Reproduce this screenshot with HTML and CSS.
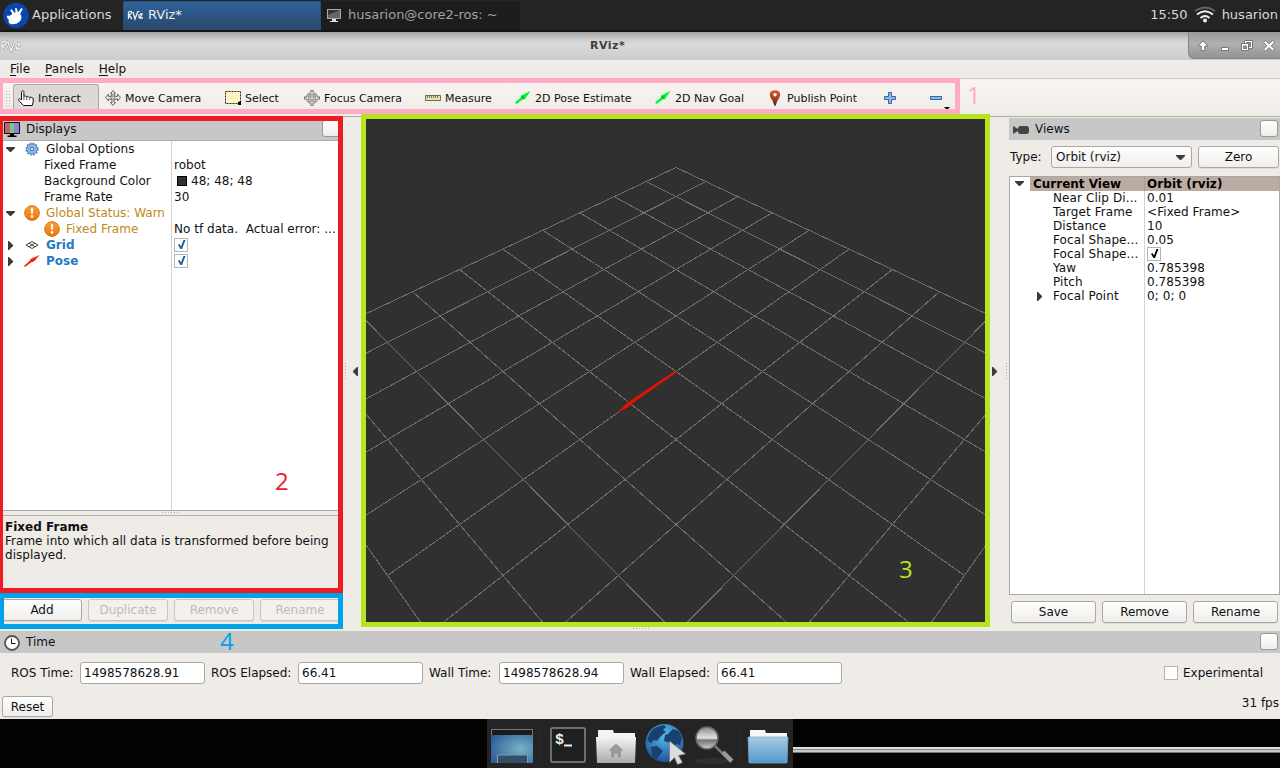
FILE: index.html
```html
<!DOCTYPE html>
<html lang="en">
<head>
<meta charset="utf-8">
<title>RViz*</title>
<link rel="stylesheet" href="styles.css">
</head>
<body>
<svg class="defs" width="0" height="0">
  <defs>
    <linearGradient id="steel" x1="0" y1="0" x2="0" y2="1"><stop offset="0" stop-color="#f4f4f4"/><stop offset="1" stop-color="#aaa"/></linearGradient>
    <linearGradient id="blueFolder" x1="0" y1="0" x2="0" y2="1"><stop offset="0" stop-color="#a9cbe4"/><stop offset="1" stop-color="#5398cc"/></linearGradient>
    <radialGradient id="desk" cx=".7" cy=".5" r=".8"><stop offset="0" stop-color="#74b5c7"/><stop offset="1" stop-color="#2e5b98"/></radialGradient>
    <radialGradient id="globe" cx=".5" cy=".3" r=".7"><stop offset="0" stop-color="#55bde6"/><stop offset="1" stop-color="#2152a0"/></radialGradient>
    <linearGradient id="lens" x1="0" y1="0" x2="0" y2="1"><stop offset="0" stop-color="#888"/><stop offset=".5" stop-color="#e2e2e2"/><stop offset=".6" stop-color="#777"/><stop offset="1" stop-color="#ccc"/></linearGradient>
    <linearGradient id="orange" x1="0" y1="0" x2="0" y2="1"><stop offset="0" stop-color="#f9a13c"/><stop offset="1" stop-color="#ee7406"/></linearGradient>
    <linearGradient id="pin" x1="0" y1="0" x2="0" y2="1"><stop offset="0" stop-color="#ec5330"/><stop offset=".5" stop-color="#a9401f"/><stop offset="1" stop-color="#3b2b14"/></linearGradient>
    <g id="warn"><circle cx="8" cy="8" r="7.4" fill="url(#orange)" stroke="#d3690b" stroke-width=".8"/><path d="M6.8 3.2h2.4l-.5 5.8H7.3z" fill="#fff"/><circle cx="8" cy="11.4" r="1.3" fill="#fff"/></g>
    <g id="goal"><path d="M0 12.500 6 7.500l-.3-1.700L15.500 1 9.800 9.200 8 9.200 1.500 14z" fill="#00f52d"/><path d="M6 7 9.500 9.200 8 6.300z" fill="#0b8e2a"/></g>
    <g id="down"><path d="M0 0h9v1L5 5H4L0 1z"/></g>
    <g id="right"><path d="M0 0h1l4 4v1L1 9H0z"/></g>
    <g id="lines">
      <path d="M0-204L-432.700 0M29.840-189.930L-409.930 32.210M61.810-174.860L-384.620 68M96.160-158.670L-356.340 108M133.140-141.230L-324.530 153M173.080-122.400L-288.470 204M216.350-102L-247.260 262.290M263.380-79.830L-199.710 329.540M314.690-55.640L-144.230 408M370.890-29.140L-78.670 500.730M432.700 0L0 612"/>
    </g>
  </defs>
</svg>

<div class="screen">
  <header class="taskbar">
    <svg class="mouse" width="26" height="27" viewBox="0 0 26 27"><circle cx="13" cy="13.500" r="12.800" fill="#0b46ac"/><path d="M4 13.500c2 .8 4.500-.3 5.200-1.800l-2-3.700 1.400-.8 3 3.600.9-.2-.4-4.500 1.500-.1 1.400 4.500 3.200-4.500 1.500.9-2.600 5c1.800 1.600 1.800 4.800 0 7.200-2.200 2.900-7 4.100-10 2.600-2-.8-1.300-2.500-1.400-4-1-1-2.400-2.700-1.700-4.200z" fill="#fff"/></svg>
    <span class="apps">Applications</span>
    <div class="task task-active">
      <svg width="16" height="12" viewBox="0 0 16 12" fill="none" stroke="#eee" stroke-width="1.300"><path d="M1.500 10V3c4-2 4 2 .5 3l3 4M6 3l2 7 3-8M12 5v4m0-7v1M13 5h2l-2 4h3"/></svg>
      <span>RViz*</span>
    </div>
    <div class="task task-idle">
      <svg width="15" height="15" viewBox="0 0 15 15"><rect x=".5" y="1.500" width="13" height="9" fill="#666" stroke="#aaa"/><path d="M1 2h12L1 7z" fill="#353535"/><path d="M5 11h4v2h2v1H3v-1h2z" fill="#ddd"/></svg>
      <span>husarion@core2-ros: ~</span>
    </div>
    <div class="tray">
      <span>15:50</span>
      <svg width="22" height="18" viewBox="0 0 22 18" fill="none" stroke-width="2"><path d="M1 5Q11-2 21 5" stroke="#666"/><path d="M3 8.500Q11 2 19 8.500M6.500 12Q11 8 15.500 12" stroke="#eee"/><circle cx="11" cy="14.500" r="2" fill="#eee"/></svg>
      <span class="user">husarion</span>
    </div>
  </header>

  <div class="titlebar">
    <svg class="rviz-mark" width="21" height="14" viewBox="0 0 21 14" fill="none"><path d="M2 12V3c6-3 6 2 1 4l4 5M8 3l3 9 4-10M16 5v5m0-8v1M17 5h3l-3 5h3" stroke="#999" stroke-width="2.600"/><path d="M2 12V3c6-3 6 2 1 4l4 5M8 3l3 9 4-10M16 5v5m0-8v1M17 5h3l-3 5h3" stroke="#f4f4f4" stroke-width="1.400"/></svg>
    <b>RViz*</b>
    <div class="winbtns">
      <svg width="92" height="28" viewBox="0 0 92 28" fill="#fff" stroke="#777" stroke-width="1"><path d="M14 9l5 5h-3.200v4.500h-3.600V14H9z"/><path d="M32.500 15.500h7v3h-7z"/><path d="M55.500 8.500h8v8h-8z"/><path d="M57.500 10.500h4v4h-4z" fill="#999"/><path d="M52.500 11.500h7v7h-7z"/><path d="M54.500 14h3v2.500h-3z" fill="#999"/><path d="M74.500 10.500l2-2 3.500 3.300 3.500-3.300 2 2-3.400 3.300 3.400 3.300-2 2-3.500-3.400-3.500 3.400-2-2 3.400-3.300z"/></svg>
    </div>
  </div>

  <nav class="menubar"><span><u>F</u>ile</span><span><u>P</u>anels</span><span><u>H</u>elp</span></nav>

  <div class="toolbar">
    <i class="grip"></i>
    <button class="tool w-interact on"><svg width="16" height="16" viewBox="0 0 16 16"><path d="M3.500 10V2.200c0-2 2.400-2 2.400 0V6.500c1-.8 2.400-.5 2.900.5 1-.6 2.400-.4 2.900.5 1.300-.7 3.300 0 3.500 1.500V12l-1 3.500H5.500L.8 10.500c-1-1.500.7-2.500 1.700-1.500z" fill="#fff" stroke="#111"/><path d="M8.700 7v3M11.800 7.500V10M5.900 6.500V10" stroke="#555"/></svg><span>Interact</span></button>
    <button class="tool w-move"><svg width="16" height="16" viewBox="0 0 16 16"><path d="M8 .5l2.500 3H9v1.500l2 1.500h1.500V4l3 3.500-3 3.500V9H11l-2 1.500V12.500h1.500L8 15.500 5.500 12.500H7V10.500L5 9H3.500v2L.5 7.500l3-3.500v2.500H5L7 5V3.500H5.500z" fill="#eee" stroke="#666"/><circle cx="8" cy="7.800" r="2" fill="#ccc" stroke="#777"/></svg><span>Move Camera</span></button>
    <button class="tool w-select"><svg width="16" height="14" viewBox="0 0 16 14"><rect x=".5" y=".5" width="15" height="12" fill="#fff6bf" stroke="#222" stroke-dasharray="2 1"/><path d="M13 13v-2l3-1v4h-3z"/></svg><span>Select</span></button>
    <button class="tool w-focus"><svg width="16" height="16" viewBox="0 0 16 16" fill="none"><circle cx="8" cy="8" r="4.800" stroke="#777" stroke-width="2.600"/><path d="M8 0v16M0 8h16" stroke="#777" stroke-width="3"/><circle cx="8" cy="8" r="4.800" stroke="#ddd"/><path d="M8 1v14M1 8h14" stroke="#eee"/></svg><span>Focus Camera</span></button>
    <button class="tool w-measure"><svg width="16" height="16" viewBox="0 0 16 16"><path d="M.5 5.500h15v5H.5z" fill="#e9e1ae" stroke="#71694d"/><path d="M2.500 6v2M4.500 6v2M6.500 6v2M8.500 6v2M10.500 6v2M12.500 6v2" stroke="#777"/></svg><span>Measure</span></button>
    <button class="tool w-pose"><svg width="16" height="16" viewBox="0 0 16 16"><use href="#goal"/></svg><span>2D Pose Estimate</span></button>
    <button class="tool w-nav"><svg width="16" height="16" viewBox="0 0 16 16"><use href="#goal"/></svg><span>2D Nav Goal</span></button>
    <button class="tool w-publish"><svg width="16" height="16" viewBox="0 0 16 16"><path d="M8 .2c7 0 6 6.300 2.500 10.300L8.600 15.800H7.400L5.500 10.500C2 6.500 1 .2 8 .2z" fill="url(#pin)"/><circle cx="8" cy="4.800" r="1.700" fill="#fff"/></svg><span>Publish Point</span></button>
    <button class="tool w-plus"><svg width="16" height="16" viewBox="0 0 16 16"><path d="M6.500 2.500h3v4h4v3h-4v4h-3v-4h-4v-3h4z" fill="#8fb8e3" stroke="#2c67a8"/></svg></button>
    <button class="tool"><svg width="16" height="16" viewBox="0 0 16 16"><path d="M2.500 6.500h11v3h-11z" fill="#8fb8e3" stroke="#2c67a8"/></svg></button>
    <svg class="more" width="6" height="3"><path d="M0 0h6L3 3z"/></svg>
  </div>

  <main class="workspace">
    <section class="displays">
      <div class="dockhead">
        <svg width="16" height="16" viewBox="0 0 16 16"><path d="M.5.500h15v11H.5z" fill="#8c9" stroke="#111"/><path d="M1 1h5v10H1z" fill="#b9666d"/><path d="M6 1h4v10H6z" fill="#7cc788"/><path d="M10 1h5v10h-5z" fill="#8886d6"/><path d="M6 12h4v1.500h2.500V15h-9v-1.500H6z"/></svg>
        <span>Displays</span><i class="float"></i>
      </div>
      <div class="tree left-tree">
        <div class="row"><div class="name"><svg class="tw" width="9" height="5"><use href="#down"/></svg><svg class="ic" width="16" height="16" viewBox="0 0 16 16"><circle cx="8" cy="8" r="5.200" fill="#8fb5e0" stroke="#5d8cc5" stroke-width="1"/><circle cx="8" cy="8" r="5.900" fill="none" stroke="#4b7fbd" stroke-width="1.500" stroke-dasharray="1.600 1.500"/><circle cx="8" cy="8" r="1.700" fill="#e4eefa" stroke="#3d70ad"/></svg><span>Global Options</span></div></div>
        <div class="row sub"><div class="name">Fixed Frame</div><div class="val">robot</div></div>
        <div class="row sub"><div class="name">Background Color</div><div class="val"><i class="swatch"></i>48; 48; 48</div></div>
        <div class="row sub"><div class="name">Frame Rate</div><div class="val">30</div></div>
        <div class="row amber"><div class="name"><svg class="tw" width="9" height="5"><use href="#down"/></svg><svg class="ic" width="16" height="16"><use href="#warn"/></svg><span>Global Status: Warn</span></div></div>
        <div class="row sub"><div class="name amber"><svg class="ic" width="16" height="16"><use href="#warn"/></svg><span>Fixed Frame</span></div><div class="val err">No tf data.&nbsp; Actual error: ...</div></div>
        <div class="row link"><div class="name"><svg class="tw side" width="5" height="9"><use href="#right"/></svg><svg class="ic" width="16" height="16" viewBox="0 0 16 16" fill="none" stroke="#444"><path d="M2 8l6-3.500L14 8l-6 3.500zM5 6.200l6 3.600M11 6.200L5 9.800"/></svg><span>Grid</span></div><div class="val"><i class="check"><svg width="9" height="10"><path d="M1 5l1.500-1L4 6.500 6.500 0H8.500L5 9H3.500z" fill="#175a9c"/></svg></i></div></div>
        <div class="row link"><div class="name"><svg class="tw side" width="5" height="9"><use href="#right"/></svg><svg class="ic" width="16" height="16" viewBox="0 0 16 16"><path d="M0 13L6.500 7l-.5-.8L15.500 2 10 8.500l-1-.5-8 6z" fill="#ff1c0a"/><path d="M6.500 7L10 8.500 7.500 9z" fill="#a30"/></svg><span>Pose</span></div><div class="val"><i class="check"><svg width="9" height="10"><path d="M1 5l1.500-1L4 6.500 6.500 0H8.500L5 9H3.500z" fill="#175a9c"/></svg></i></div></div>
      </div>
      <div class="split"><i class="dots-h"></i></div>
      <div class="help"><b>Fixed Frame</b><br>Frame into which all data is transformed before being displayed.</div>
      <div class="btns left-btns"><button class="btn">Add</button><button class="btn off">Duplicate</button><button class="btn off">Remove</button><button class="btn off">Rename</button></div>
      <div class="mark mark-red"><span>2</span></div>
      <div class="mark mark-blue"><span>4</span></div>
    </section>

    <div class="gutter gutter-l"><i class="dots-v"></i><svg width="5" height="9" viewBox="0 0 5 9"><path d="M5 0v9H4L0 5V4l4-4z"/></svg></div>

    <section class="view3d">
      <svg width="619" height="503" viewBox="366 119 619 503">
        <g fill="none" stroke="#6e6e6e" stroke-width="1" shape-rendering="crispEdges" transform="translate(676 371.500)"><use href="#lines"/><use href="#lines" transform="scale(-1 1)"/></g>
        <path d="M675.500 370.500l1 2-45 31.500-2.500 3-12 6 8-8 4-3.500z" fill="#dc1500"/><path d="M621 411l10-5-3 3z" fill="#7d0d00"/>
      </svg>
      <span class="num3">3</span>
      <i class="dots-h below"></i>
    </section>

    <div class="gutter gutter-r"><svg width="5" height="9"><use href="#right"/></svg><i class="dots-v"></i></div>

    <section class="views">
      <div class="dockhead">
        <svg width="17" height="10" viewBox="0 0 17 10" fill="#444"><path d="M0 1l5 3v2L0 9zM4 4h2v2H4z"/><rect x="5" y="1" width="11" height="8" rx="2.500"/></svg>
        <span>Views</span><i class="float"></i>
      </div>
      <div class="typerow"><span>Type:</span><div class="combo">Orbit (rviz)<svg width="9" height="5"><use href="#down"/></svg></div><button class="btn">Zero</button></div>
      <div class="tree right-tree">
        <div class="row head"><div class="lead"><svg width="9" height="5"><use href="#down"/></svg></div><div class="name">Current View</div><div class="val">Orbit (rviz)</div></div>
        <div class="row"><div class="name">Near Clip Di...</div><div class="val">0.01</div></div>
        <div class="row"><div class="name">Target Frame</div><div class="val">&lt;Fixed Frame&gt;</div></div>
        <div class="row"><div class="name">Distance</div><div class="val">10</div></div>
        <div class="row"><div class="name">Focal Shape...</div><div class="val">0.05</div></div>
        <div class="row"><div class="name">Focal Shape...</div><div class="val"><i class="check"><svg width="9" height="10"><path d="M1 5l1.500-1L4 6.500 6.500 0H8.500L5 9H3.500z"/></svg></i></div></div>
        <div class="row"><div class="name">Yaw</div><div class="val">0.785398</div></div>
        <div class="row"><div class="name">Pitch</div><div class="val">0.785398</div></div>
        <div class="row fp"><div class="name"><svg width="5" height="9"><use href="#right"/></svg>Focal Point</div><div class="val">0; 0; 0</div></div>
      </div>
      <div class="btns right-btns"><button class="btn">Save</button><button class="btn">Remove</button><button class="btn">Rename</button></div>
    </section>
  </main>

  <section class="time">
    <div class="dockhead">
      <svg width="16" height="16" viewBox="0 0 16 16"><circle cx="8" cy="8" r="7" fill="#fff" stroke="#555" stroke-width="1.800"/><path d="M7.500 3.500v5h4" fill="none" stroke="#111"/></svg>
      <span>Time</span><i class="float"></i>
    </div>
    <div class="timerow">
      <span>ROS Time:</span><div class="field">1498578628.91</div>
      <span>ROS Elapsed:</span><div class="field">66.41</div>
      <span>Wall Time:</span><div class="field">1498578628.94</div>
      <span>Wall Elapsed:</span><div class="field">66.41</div>
      <div class="exp"><i></i>Experimental</div>
    </div>
    <div class="statusrow"><button class="btn">Reset</button><span>31 fps</span></div>
  </section>

  <footer class="desktop">
    <div class="dock">
      <svg width="306" height="49" viewBox="487 719 306 49">
        <rect x="491.500" y="729.500" width="41" height="33" fill="#1b1b1b" stroke="#777"/><rect x="491" y="735" width="42" height="28" fill="url(#desk)"/><path d="M497.500 763v-8h30v8" fill="#345067" stroke="#77a0b8"/><path d="M540.500 727v34M740.500 727v34" stroke="#2e2e2e"/>
        <rect x="551" y="728" width="34" height="34" rx="1" fill="#202020" stroke="#888" stroke-width="1.500"/><text x="555" y="744" class="prompt">$</text><path d="M564 745.500h8" stroke="#eee" stroke-width="2"/>
        <path d="M598 735v-5h15l1 3h21v6h-37z" fill="#f4f4f4"/><path d="M596 737h40l-1 26h-38z" fill="url(#steel)"/><path d="M616 743.500l7.500 7h-2.500v7h-3.500v-4h-3v4H611v-7h-2.500z" fill="#999"/>
        <circle cx="664.500" cy="743" r="19" fill="url(#globe)"/><path d="M650 733c3-5 8-7 14-8l2 2-3 3 3 2-5 4-4 5-3-1-3 3-4-3zM668 734l5-5 6 2 3 7-2 7-4-1-1 6-5-7-6-2 1-6zM651 747l6-1 6 5-4 5-3 4-4-4z" fill="#18416f"/><path d="M669.500 741l16 13-7 1.500 4 7-5 2-3-7-5 5z" fill="#ddd" stroke="#777" stroke-width=".7"/>
        <ellipse cx="712" cy="761" rx="17" ry="3" fill="#2f2f2f"/><path d="M714 745l17 17" stroke="#777" stroke-width="2.500"/><path d="M723 752l9 9" stroke="#999" stroke-width="4"/><circle cx="707" cy="738" r="11" fill="url(#lens)" stroke="#666" stroke-width="1.500"/>
        <path d="M750 735v-5h15l1 3h21v6h-37z" fill="#f7f7f7"/><path d="M748 737h40l-1 26h-38z" fill="url(#blueFolder)" stroke="#80aacb" stroke-width=".7"/>
      </svg>
    </div>
    <div class="edge"></div>
  </footer>

  <div class="mark mark-pink"><span>1</span></div>
</div>
</body>
</html>
```

FILE: styles.css
```css
* { box-sizing: border-box; }
body { margin: 0; background: #000; font: 12px/14px "DejaVu Sans", sans-serif; color: #111; }
.defs { position: absolute; }
.screen { position: relative; width: 1280px; height: 768px; overflow: hidden; display: flex; flex-direction: column; background: #efebe7; }
svg { display: block; flex: none; }
button { font: inherit; color: inherit; margin: 0; }
span { white-space: nowrap; }

.taskbar { height: 32px; flex: none; display: flex; align-items: center; background: #242424; border-bottom: 2px solid #151515; color: #d8d8d8; font-size: 13px; padding-left: 3px; }
.apps { margin-left: 3px; width: 91px; }
.task { height: 29px; display: flex; align-items: center; gap: 6px; padding: 0 5px; }
.task-active { width: 198px; background: linear-gradient(#2f629b, #29486c); border: 1px solid #264f7d; color: #eee; padding-left: 3px; gap: 5px; }
.task-idle { width: 199px; background: #1d1d1d; color: #a2a2a2; padding-left: 6px; }
.tray { margin-left: auto; display: flex; align-items: center; gap: 6px; padding-right: 2px; }

.titlebar { height: 28px; flex: none; display: flex; align-items: center; background: linear-gradient(#a2a2a2, #cdcdcd 7px, #dadada 12px, #cbcbcb); color: #3c3c3c; font-size: 11px; letter-spacing: .5px; }
.titlebar b { margin-left: 569px; }
.winbtns { margin-left: auto; width: 92px; height: 27px; align-self: flex-start; background: linear-gradient(#999, #b0b0b0 45%, #929292); border-left: 1px solid #858585; border-bottom: 1px solid #858585; border-bottom-left-radius: 6px; }

.menubar { height: 18px; flex: none; display: flex; gap: 15px; align-items: center; padding-left: 10px; }
.menubar u { text-underline-offset: 2px; }

.toolbar { height: 39px; flex: none; display: flex; align-items: stretch; padding: 5px 0 7px 5px; background: linear-gradient(#f8f5f1, #efebe7); border-top: 1px solid #c9c6c2; border-bottom: 1px solid #aeaba7; font-size: 11px; position: relative; }
.grip { width: 8px; margin: 6px 0 2px; background: radial-gradient(circle, #b8b5b1 0.7px, transparent 1px) 0 0 / 3px 3px; background-clip: content-box; padding-right: 3px; }
.tool { display: flex; align-items: center; gap: 4px; border: 0; background: none; padding: 3px 0 0 5px; text-align: left; flex: none; }
.tool span { padding-top: 2px; }
.tool.on { background: #dcdad6; border: 1px solid #aaa8a4; border-bottom: 0; border-radius: 3px 3px 0 0; padding: 2px 0 0 4px; margin-right: 1px; }
.w-interact { width: 86px; } .w-move { width: 120px; } .w-select { width: 79px; } .w-focus { width: 121px; } .w-measure { width: 90px; }
.w-pose { width: 140px; } .w-nav { width: 112px; } .w-publish { width: 115px; } .w-plus { width: 46px; }
.more { position: absolute; left: 944px; bottom: 6px; }

.workspace { height: 514px; flex: none; display: grid; grid-template-columns: 341px 20px 629px 19px 271px; }
.dockhead { display: flex; align-items: center; height: 22px; background: #c7c7c7; flex: none; }
.dockhead span { margin-left: 6px; }
.float { margin-left: auto; width: 18px; height: 17px; border: 1px solid #999; border-radius: 3px; background: linear-gradient(#fff, #efeeec); }

.displays { position: relative; display: flex; flex-direction: column; padding-top: 1px; min-width: 0; }
.displays .dockhead { padding-left: 4px; border-bottom: 1px solid #aaa; height: 23px; }
.displays .dockhead svg { margin-top: 2px; }
.displays .float { margin-right: 1px; margin-top: -2px; }
.row { display: flex; align-items: center; white-space: nowrap; }
.name, .val { display: flex; align-items: center; }
.left-tree { height: 370px; margin-left: 3px; background: linear-gradient(#d2d2d2, #d2d2d2) 168px 0 / 1px 100% no-repeat #fff; border-bottom: 1px solid #aaa8a4; }
.left-tree .row { height: 16px; }
.left-tree .name { width: 168px; padding-left: 3px; flex: none; }
.left-tree .val { padding-left: 3px; }
.left-tree .err { letter-spacing: .03px; }
.left-tree .sub .name { padding-left: 41px; }
.tw { margin-right: 9px; fill: #3c3c3c; }
.tw.side { margin: 0 11px 0 2px; }
.ic { margin-right: 6px; }
.amber { color: #c08a17; }
.link .name { color: #2878c4; font-weight: bold; }
.swatch { width: 10px; height: 10px; border: 1px solid #000; background: #303030; margin: 0 4px 0 3px; }
.check { width: 14px; height: 14px; border: 1px solid #b7b5b2; background: #fff; display: flex; justify-content: center; align-items: center; }
.split { height: 5px; border-bottom: 1px solid #b5b2ae; display: flex; justify-content: center; align-items: center; flex: none; }
.dots-h { width: 18px; height: 2px; background: repeating-linear-gradient(90deg, #b0adaa 0 1px, transparent 1px 3px) 0 0 / 100% 1px no-repeat; }
.help { height: 83px; padding: 4px 5px; letter-spacing: .02px; }
.btns { display: grid; gap: 6px; }
.btn { height: 22px; padding: 0; border: 1px solid #aaa8a5; border-radius: 3px; background: linear-gradient(#fefefe, #efeeec); text-align: center; box-shadow: 0 1px 0 #dedbd7; }
.btn.off { color: #bdbbb8; border-color: #c8c5c1; background: #f3f1ee; }
.left-btns { grid-template-columns: repeat(4, 80px); padding-left: 2px; }

.mark { position: absolute; pointer-events: none; font: 24px/24px "Open Sans", sans-serif; }
.mark span { position: absolute; }
.mark-pink { left: 0; top: 78px; width: 960px; height: 36px; border: 5px solid #ffaac6; border-left-width: 3px; color: #ffaac6; }
.mark-pink span { left: 964px; top: 0; }
.mark-red { left: 0; top: -1px; width: 343px; height: 477px; border: 5px solid #ed1c24; border-left-width: 3px; color: #ed1c24; }
.mark-red span { left: 272px; top: 348px; }
.mark-blue { left: 0; top: 476px; width: 343px; height: 36px; border: 5px solid #00a2e8; border-left-width: 4px; color: #00a2e8; }
.mark-blue span { left: 216px; top: 31px; }

.gutter { display: flex; align-items: center; fill: #3c3c3c; padding-bottom: 5px; }
.gutter-l { gap: 6px; padding-left: 4px; }
.gutter-r { gap: 9px; padding-left: 2px; }
.dots-v { width: 2px; height: 18px; background: repeating-linear-gradient(#b0adaa 0 1px, transparent 1px 3px) 0 0 / 1px 100% no-repeat; }
.view3d { position: relative; height: 513px; margin-top: -3px; border: 5px solid #b5e61d; background: #303030; }
.num3 { position: absolute; left: 533px; top: 438px; font: 24px/24px "Open Sans", sans-serif; color: #b5e61d; }
.below { position: absolute; left: 267px; top: 509px; }

.views { display: flex; flex-direction: column; padding-top: 1px; min-width: 0; }
.views .dockhead { padding: 0 2px 0 4px; }
.views .dockhead svg { margin-top: 2px; }
.views .dockhead span { margin-left: 5px; }
.views .float { margin-top: -1px; }
.typerow { display: grid; grid-template-columns: 34px 141px 80px; column-gap: 7px; align-items: center; padding: 6px 0 8px 1px; }
.typerow .btn { margin-left: -1px; }
.combo { height: 22px; border: 1px solid #aaa8a5; border-radius: 3px; background: linear-gradient(#fefefe, #efeeec); display: flex; align-items: center; justify-content: space-between; padding: 0 6px 0 4px; fill: #3c3c3c; }
.right-tree { height: 419px; border: 1px solid #aaa8a4; background: linear-gradient(#d2d2d2, #d2d2d2) 134px 0 / 1px 100% no-repeat #fff; }
.right-tree .row { height: 14px; }
.right-tree .name { width: 134px; padding-left: 43px; flex: none; letter-spacing: .1px; }
.right-tree .val { padding-left: 3px; letter-spacing: .08px; }
.right-tree .head { background: linear-gradient(#a99d95, #a99d95) 134px 0 / 1px 100% no-repeat #baaca2; font-weight: bold; color: #000; }
.lead { width: 20px; height: 14px; background: #fff; padding: 4px 0 0 5px; fill: #3c3c3c; }
.right-tree .head .name { width: 114px; padding-left: 3px; letter-spacing: 0; }
.right-tree .fp .name { padding-left: 27px; gap: 11px; fill: #3c3c3c; }
.right-btns { grid-template-columns: repeat(3, 85px); padding: 6px 0 0 2px; }

.time { height: 88px; flex: none; display: flex; flex-direction: column; }
.time .dockhead { padding: 0 2px 0 4px; }
.time .dockhead svg { margin-top: 2px; }
.time .float { margin-top: -2px; }
.timerow { height: 42px; display: grid; grid-template-columns: 63px 125px 81px 125px 64px 125px 81px 125px 1fr; column-gap: 6px; align-items: center; padding: 0 0 2px 11px; }
.field { height: 22px; border: 1px solid #aaa8a5; border-radius: 3px; background: #fff; padding: 3px; }
.exp { justify-self: end; display: flex; align-items: center; gap: 5px; padding-right: 17px; }
.exp i { width: 14px; height: 14px; border: 1px solid #b7b5b2; background: #fff; }
.statusrow { display: flex; justify-content: space-between; padding: 1px 1px 0 2px; }
.statusrow .btn { width: 51px; height: 21px; }

.desktop { height: 49px; flex: none; display: flex; background: #050202; }
.dock { margin-left: 487px; width: 306px; background: #242424; }
.edge { flex: 1; margin-top: 28px; height: 6px; background: linear-gradient(#ddd 0 2px, #888 2px 3px, #c8c8c8 3px 5px, #777 5px); }
.prompt { font: bold 15px "Liberation Mono", monospace; fill: #eee; }
```
